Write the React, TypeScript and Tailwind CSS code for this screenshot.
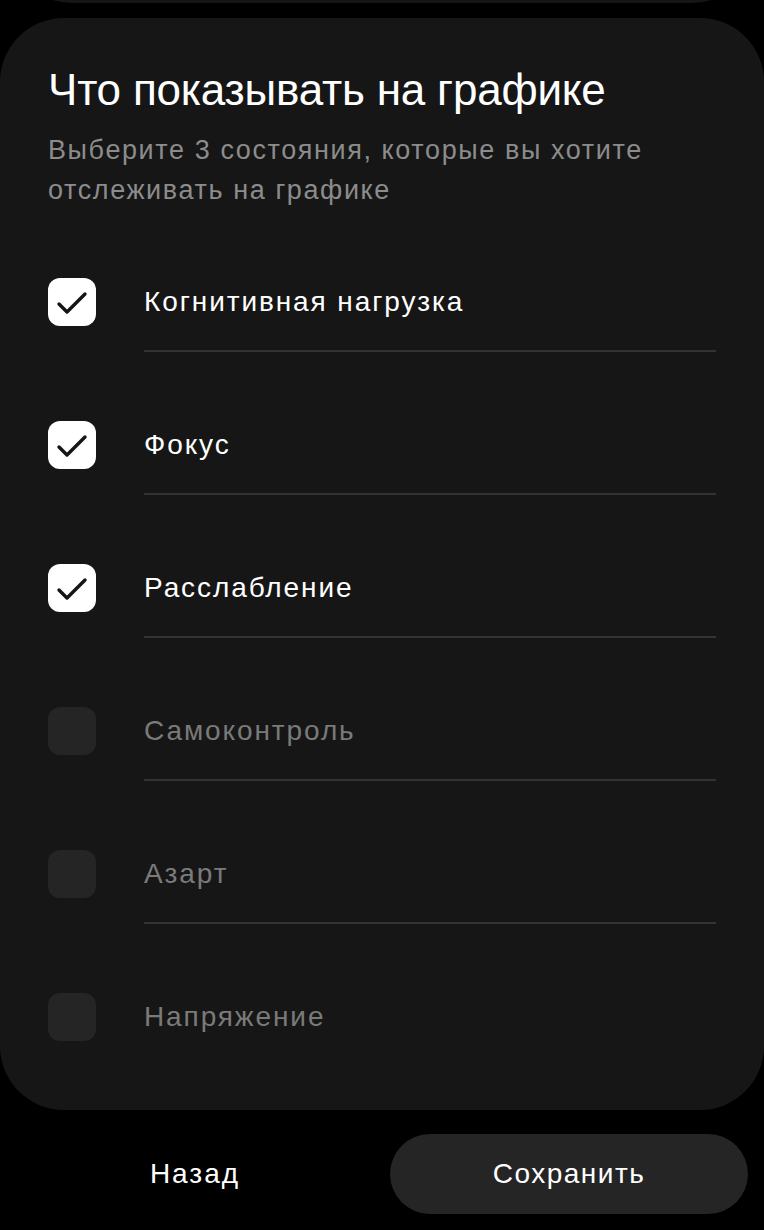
import React from "react";

const items = [
  { label: "Когнитивная нагрузка", checked: true },
  { label: "Фокус", checked: true },
  { label: "Расслабление", checked: true },
  { label: "Самоконтроль", checked: false },
  { label: "Азарт", checked: false },
  { label: "Напряжение", checked: false },
];

function Check() {
  return (
    <svg width="48" height="48" viewBox="0 0 48 48" fill="none">
      <path d="M11 26 L19 34 L37 16" stroke="#151515" strokeWidth="3.4" strokeLinecap="round" strokeLinejoin="round" />
    </svg>
  );
}

export default function App() {
  const font = { fontFamily: '"Liberation Sans", Arial, sans-serif' };
  return (
    <div className="w-[764px] h-[1230px] bg-black flex flex-col overflow-hidden" style={font}>
      <div className="h-[3px] overflow-hidden shrink-0 px-[8px]">
        <div className="h-[80px] -mt-[77px] bg-[#161616] rounded-b-[64px]" />
      </div>
      <div className="mt-[15px] bg-[#161616] rounded-[64px] pt-[50px] pb-[45px] pl-[48px] pr-[48px] flex flex-col">
        <h1 className="text-[44px] leading-[44px] text-white tracking-[-0.2px]">Что показывать на графике</h1>
        <p className="mt-[18px] text-[27px] leading-[40px] text-[#8c8c8c] tracking-[1.6px]">
          Выберите 3 состояния, которые вы хотите отслеживать на графике
        </p>
        <div className="mt-[44px] flex flex-col">
          {items.map((it, i) => (
            <div key={i} className={i < items.length - 1 ? "pb-[45px]" : ""}>
              <div className="flex items-center h-[96px]">
                {it.checked ? (
                  <div className="w-[48px] h-[48px] rounded-[12px] bg-white flex items-center justify-center shrink-0">
                    <Check />
                  </div>
                ) : (
                  <div className="w-[48px] h-[48px] rounded-[12px] bg-[#252525] shrink-0" />
                )}
                <span className={"ml-[48px] text-[28px] tracking-[1.9px] " + (it.checked ? "text-white" : "text-[#7a7a7a]")}>{it.label}</span>
              </div>
              {i < items.length - 1 && <div className="ml-[96px] h-[2px] bg-[#333333]" />}
            </div>
          ))}
        </div>
      </div>
      <div className="mt-[24px] px-[16px] flex gap-[16px]">
        <button className="flex-1 h-[80px] rounded-full text-white text-[28px] tracking-[2px]">Назад</button>
        <button className="flex-1 h-[80px] rounded-full bg-[#252525] text-white text-[28px] tracking-[1.5px]">Сохранить</button>
      </div>
    </div>
  );
}
